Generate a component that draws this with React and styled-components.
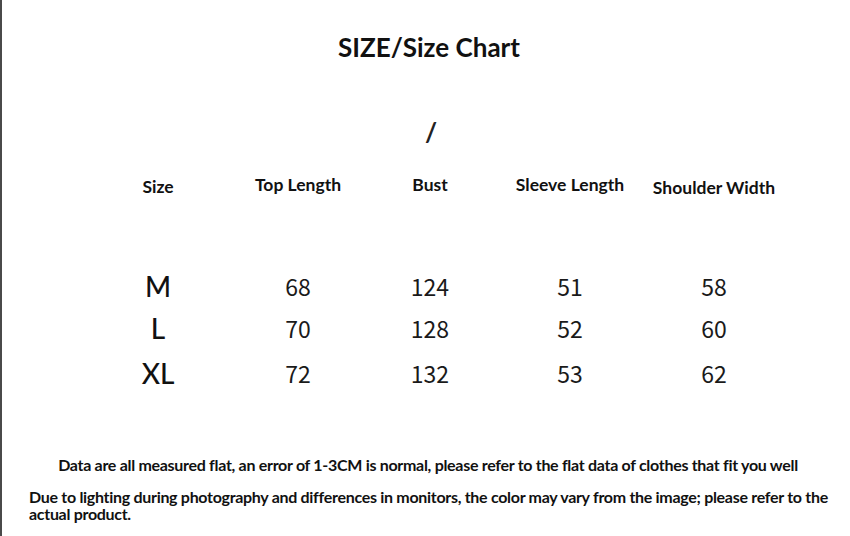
import styled, { createGlobalStyle } from 'styled-components'

const Global = createGlobalStyle`
  html, body { margin: 0; padding: 0; background: #fff; }
  body { font-family: Lato, "Liberation Sans", sans-serif; color: #111; }
`

const Page = styled.div`
  width: 850px;
  height: 536px;
  box-sizing: border-box;
  border-left: 2px solid #4a4a4a;
  display: flex;
  flex-direction: column;
  overflow: hidden;
`

const Title = styled.h1`
  margin: 31px 0 0;
  text-align: center;
  font-size: 26px;
  line-height: 32px;
  font-weight: 700;
  padding-left: 6px;
`

const Slash = styled.div`
  margin: 54px 0 28px;
  text-align: center;
  font-size: 26px;
  line-height: 30px;
  font-weight: 700;
  padding-left: 10px;
  color: #222;
`

const Table = styled.div`
  display: grid;
  grid-template-columns: 140px 140px 124px 156px 132px;
  margin-left: 86px;
`

const Head = styled.div`
  text-align: center;
  font-size: 17.5px;
  font-weight: 700;
  line-height: 20px;
  margin-top: ${p => p.$dy || 0}px;
  height: 20px;
  white-space: nowrap;
`

const Row = styled.div`
  display: contents;
`

const Spacer = styled.div`
  grid-column: 1 / -1;
  height: 68px;
`

const SizeCell = styled.div`
  text-align: center;
  font-family: Lato, sans-serif;
  font-size: 28px;
  font-weight: 500;
  line-height: ${p => p.$h}px;
`

const Num = styled.div`
  text-align: center;
  font-family: "Noto Sans CJK SC", "Noto Sans", sans-serif;
  font-size: 23px;
  font-weight: 400;
  color: #1a1a1a;
  line-height: ${p => p.$h}px;
`

const Note = styled.p`
  margin: 0;
  font-size: 16px;
  font-weight: 700;
  line-height: 17px;
  letter-spacing: -0.3px;
`

const NoteCenter = styled(Note)`
  margin-top: 60px;
  text-align: center;
  padding-left: 4px;
`

const NoteLeft = styled(Note)`
  margin-top: 15px;
  padding: 0 18px 0 27px;
`

const heads = [
  { t: 'Size', dy: 2 },
  { t: 'Top Length', dy: 0 },
  { t: 'Bust', dy: 0 },
  { t: 'Sleeve Length', dy: 0 },
  { t: 'Shoulder Width', dy: 3 },
]

const rows = [
  { s: 'M', v: [68, 124, 51, 58], h: 41 },
  { s: 'L', v: [70, 128, 52, 60], h: 43 },
  { s: 'XL', v: [72, 132, 53, 62], h: 46 },
]

export default function App() {
  return (
    <>
      <Global />
      <Page>
        <Title>SIZE/Size Chart</Title>
        <Slash>/</Slash>
        <Table>
          <Row>
            {heads.map(h => <Head key={h.t} $dy={h.dy}>{h.t}</Head>)}
          </Row>
          <Spacer />
          {rows.map(r => (
            <Row key={r.s}>
              <SizeCell $h={r.h}>{r.s}</SizeCell>
              {r.v.map((n, i) => <Num key={i} $h={r.h}>{n}</Num>)}
            </Row>
          ))}
        </Table>
        <NoteCenter>Data are all measured flat, an error of 1-3CM is normal, please refer to the flat data of clothes that fit you well</NoteCenter>
        <NoteLeft>Due to lighting during photography and differences in monitors, the color may vary from the image; please refer to the actual product.</NoteLeft>
      </Page>
    </>
  )
}
